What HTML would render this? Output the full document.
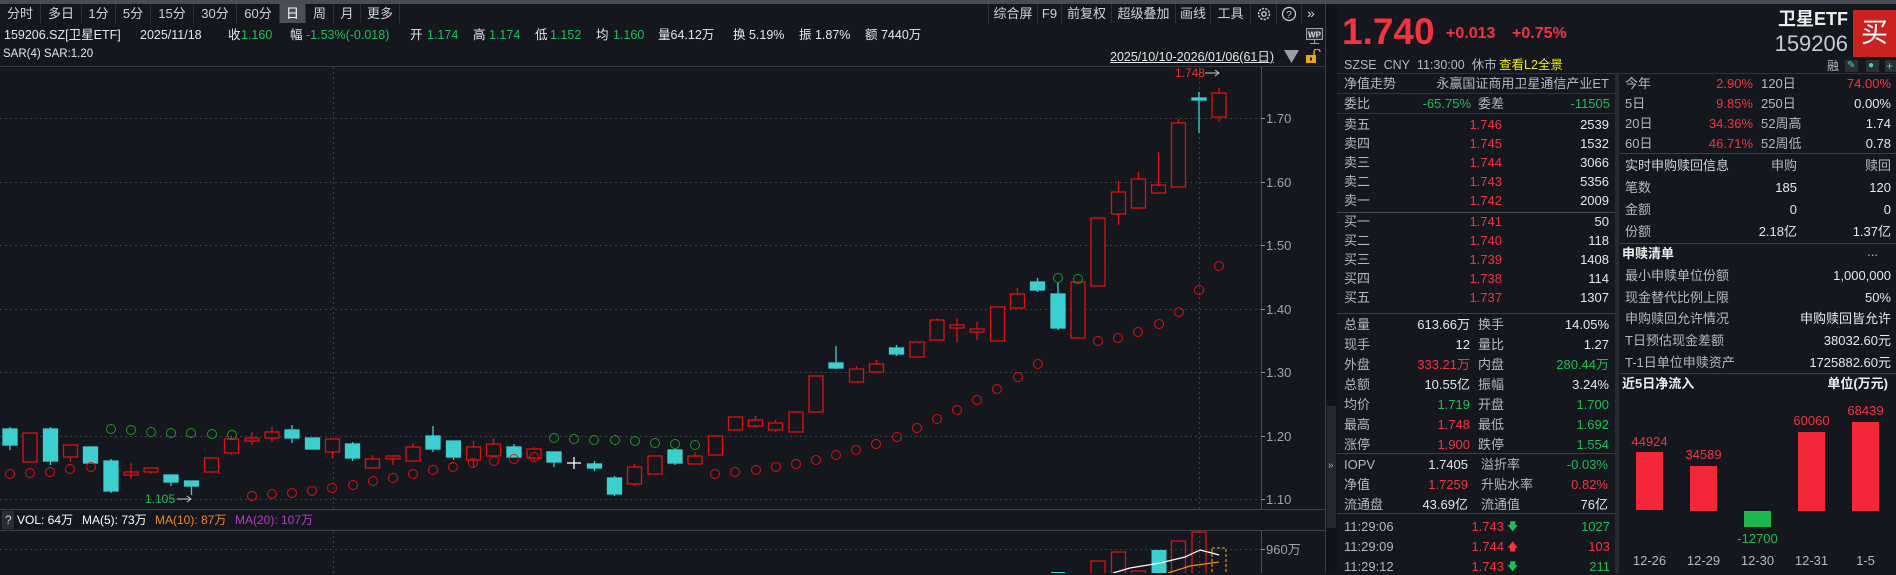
<!DOCTYPE html>
<html><head><meta charset="utf-8"><style>
*{margin:0;padding:0;box-sizing:border-box}
body{width:1896px;height:573px;background:#14171e;overflow:hidden;position:relative;font-family:"Liberation Sans","Noto Sans CJK SC",sans-serif;color:#d6d8dc;font-size:13px}
.a{position:absolute;white-space:nowrap;line-height:16px;height:16px}
.lb{color:#b4b8c0}
.w{color:#e6e8ea}
.rd{color:#f5333f}
.gn{color:#1fbf55}
.hl{position:absolute;height:1px;background:#2e323a}
.tab{position:absolute;top:4px;height:19px;line-height:19px;text-align:center;color:#d0d2d6;font-size:13px;border-right:1px solid #2c3038}
</style></head><body>
<!-- top strip -->
<div style="position:absolute;left:0;top:0;width:1896px;height:4px;background:#474c55"></div>
<!-- left tabs -->
<div class="tab" style="left:0;width:41px">分时</div>
<div class="tab" style="left:41px;width:41px">多日</div>
<div class="tab" style="left:82px;width:34px">1分</div>
<div class="tab" style="left:116px;width:35px">5分</div>
<div class="tab" style="left:151px;width:43px">15分</div>
<div class="tab" style="left:194px;width:43px">30分</div>
<div class="tab" style="left:237px;width:43px">60分</div>
<div class="tab" style="left:280px;width:26px;background:#4a4f58;color:#fff">日</div>
<div class="tab" style="left:306px;width:28px">周</div>
<div class="tab" style="left:334px;width:27px">月</div>
<div class="tab" style="left:361px;width:39px">更多</div>
<!-- right toolbar -->
<div class="tab" style="left:988px;width:50px;border-left:1px solid #2c3038">综合屏</div>
<div class="tab" style="left:1038px;width:24px">F9</div>
<div class="tab" style="left:1062px;width:50px">前复权</div>
<div class="tab" style="left:1112px;width:64px">超级叠加</div>
<div class="tab" style="left:1176px;width:35px">画线</div>
<div class="tab" style="left:1211px;width:40px">工具</div>
<div class="tab" style="left:1251px;width:26px"><svg width="16" height="16" viewBox="0 0 16 16" style="margin-top:2px"><circle cx="8" cy="8" r="5.5" fill="none" stroke="#d0d2d6" stroke-width="1.4" stroke-dasharray="2.2 1.2"/><circle cx="8" cy="8" r="2.2" fill="none" stroke="#d0d2d6" stroke-width="1.3"/></svg></div>
<div class="tab" style="left:1277px;width:25px"><svg width="16" height="16" viewBox="0 0 16 16" style="margin-top:2px"><circle cx="8" cy="8" r="6.5" fill="none" stroke="#d0d2d6" stroke-width="1.2"/><text x="8" y="12" font-size="10" fill="#d0d2d6" text-anchor="middle" font-family="Liberation Sans">?</text></svg></div>
<div class="a" style="left:1307px;top:5px;color:#d0d2d6;font-size:14px">»</div>
<!-- sidebar icons -->
<svg style="position:absolute;left:1306px;top:28px" width="17" height="16" viewBox="0 0 17 16"><rect x="0.5" y="0.5" width="16" height="11" fill="#2a2e36" stroke="#9ca0a8"/><text x="8.5" y="9.5" font-size="8" fill="#e0e0e0" text-anchor="middle" font-family="Liberation Sans" font-weight="bold">WP</text><line x1="8.5" y1="12" x2="8.5" y2="15" stroke="#9ca0a8"/><line x1="4" y1="15.5" x2="13" y2="15.5" stroke="#9ca0a8"/></svg>
<svg style="position:absolute;left:1305px;top:49px" width="17" height="14" viewBox="0 0 17 14"><path d="M9 6V3a3 3 0 0 1 6 0" fill="none" stroke="#e6a817" stroke-width="1.5"/><rect x="1" y="6" width="10" height="8" fill="#e6a817"/><rect x="5" y="8.5" width="2" height="3" fill="#14171e"/></svg>
<!-- info rows -->
<div class="a" style="left:4px;top:27px;font-size:12.5px"><span class="w">159206.SZ[卫星ETF]</span></div>
<div class="a w" style="left:140px;top:27px;font-size:12.5px">2025/11/18</div>
<div class="a w" style="left:228px;top:27px;font-size:12.5px">收</div><div class="a gn" style="left:241px;top:27px;font-size:12.5px">1.160</div>
<div class="a w" style="left:290px;top:27px;font-size:12.5px">幅</div><div class="a gn" style="left:306px;top:27px;font-size:12.5px">-1.53%(-0.018)</div>
<div class="a w" style="left:410px;top:27px;font-size:12.5px">开</div><div class="a gn" style="left:427px;top:27px;font-size:12.5px">1.174</div>
<div class="a w" style="left:473px;top:27px;font-size:12.5px">高</div><div class="a gn" style="left:489px;top:27px;font-size:12.5px">1.174</div>
<div class="a w" style="left:535px;top:27px;font-size:12.5px">低</div><div class="a gn" style="left:550px;top:27px;font-size:12.5px">1.152</div>
<div class="a w" style="left:596px;top:27px;font-size:12.5px">均</div><div class="a gn" style="left:613px;top:27px;font-size:12.5px">1.160</div>
<div class="a w" style="left:658px;top:27px;font-size:12.5px">量64.12万</div>
<div class="a w" style="left:733px;top:27px;font-size:12.5px">换 5.19%</div>
<div class="a w" style="left:799px;top:27px;font-size:12.5px">振 1.87%</div>
<div class="a w" style="left:865px;top:27px;font-size:12.5px">额 7440万</div>
<div class="a w" style="left:3px;top:46px;font-size:11.5px">SAR(4) SAR:1.20</div>
<div class="a w" style="left:1110px;top:49px;font-size:12.5px;text-decoration:underline">2025/10/10-2026/01/06(61日)</div>
<svg style="position:absolute;left:1284px;top:50px" width="15" height="13"><path d="M0 0H15L7.5 13Z" fill="#9a9ea6"/></svg>
<div class="hl" style="left:0;top:66px;width:1325px;background:#34383f"></div>

<!-- chart svg -->
<svg style="position:absolute;left:0;top:0" width="1325" height="573">
<g stroke="#3a3f48" stroke-dasharray="2 3" stroke-width="1">
<line x1="0" y1="118.5" x2="1261" y2="118.5"/><line x1="0" y1="182.5" x2="1261" y2="182.5"/><line x1="0" y1="245.5" x2="1261" y2="245.5"/><line x1="0" y1="309.5" x2="1261" y2="309.5"/><line x1="0" y1="372.5" x2="1261" y2="372.5"/><line x1="0" y1="436.5" x2="1261" y2="436.5"/><line x1="0" y1="499.5" x2="1261" y2="499.5"/>
<line x1="333.5" y1="67" x2="333.5" y2="509"/><line x1="1199.5" y1="67" x2="1199.5" y2="509"/>
<line x1="333.5" y1="531" x2="333.5" y2="573"/><line x1="1199.5" y1="531" x2="1199.5" y2="573"/>
<line x1="0" y1="549.5" x2="1261" y2="549.5"/>
</g>
<line x1="1261.5" y1="67" x2="1261.5" y2="509" stroke="#4a4e56"/>
<line x1="1261.5" y1="530" x2="1261.5" y2="573" stroke="#4a4e56"/>
<line x1="0" y1="509.5" x2="1325" y2="509.5" stroke="#3e4249"/>
<line x1="0" y1="530.5" x2="1325" y2="530.5" stroke="#3e4249"/>
<g stroke="#8a8e96"><line x1="1261" y1="118.5" x2="1265" y2="118.5"/><line x1="1261" y1="182.5" x2="1265" y2="182.5"/><line x1="1261" y1="245.5" x2="1265" y2="245.5"/><line x1="1261" y1="309.5" x2="1265" y2="309.5"/><line x1="1261" y1="372.5" x2="1265" y2="372.5"/><line x1="1261" y1="436.5" x2="1265" y2="436.5"/><line x1="1261" y1="499.5" x2="1265" y2="499.5"/><line x1="1261" y1="549.5" x2="1265" y2="549.5"/></g>
<g font-family="Liberation Sans" font-size="13" fill="#9ea2aa">
<text x="1266" y="123">1.70</text><text x="1266" y="187">1.60</text><text x="1266" y="250">1.50</text><text x="1266" y="314">1.40</text><text x="1266" y="377">1.30</text><text x="1266" y="441">1.20</text><text x="1266" y="504">1.10</text>
<text x="1266" y="554">960<tspan font-family="Noto Sans CJK SC">万</tspan></text>
</g>
<!-- candles -->
<g stroke="#e01010" stroke-width="1.3" fill="#14171e">
<line x1="30" y1="433" x2="30" y2="462"/><rect x="23" y="433" width="14" height="29"/>
<line x1="70.5" y1="445" x2="70.5" y2="462"/><rect x="63.5" y="445" width="14" height="12"/>
<line x1="131" y1="463" x2="131" y2="479"/><rect x="124" y="472" width="14" height="3"/>
<line x1="151" y1="468" x2="151" y2="474"/><rect x="144" y="468" width="14" height="4"/>
<line x1="211.5" y1="458" x2="211.5" y2="472"/><rect x="204.5" y="458" width="14" height="14"/>
<line x1="231.5" y1="436" x2="231.5" y2="455"/><rect x="224.5" y="439" width="14" height="14"/>
<line x1="252" y1="432" x2="252" y2="445"/><rect x="245" y="438" width="14" height="3"/>
<line x1="272" y1="427" x2="272" y2="442"/><rect x="265" y="432" width="14" height="6"/>
<line x1="332.5" y1="439" x2="332.5" y2="458"/><rect x="325.5" y="439" width="14" height="13"/>
<line x1="372.5" y1="455" x2="372.5" y2="468"/><rect x="365.5" y="459" width="14" height="9"/>
<line x1="393" y1="455" x2="393" y2="465"/><rect x="386" y="456" width="14" height="3"/>
<line x1="413" y1="443" x2="413" y2="461"/><rect x="406" y="447" width="14" height="14"/>
<line x1="473.5" y1="441" x2="473.5" y2="468"/><rect x="466.5" y="447" width="14" height="13"/>
<line x1="493.5" y1="438" x2="493.5" y2="456"/><rect x="486.5" y="444" width="14" height="12"/>
<line x1="534" y1="447" x2="534" y2="461"/><rect x="527" y="449" width="14" height="9"/>
<line x1="634.5" y1="464" x2="634.5" y2="486"/><rect x="627.5" y="467" width="14" height="17"/>
<line x1="655" y1="456" x2="655" y2="474"/><rect x="648" y="456" width="14" height="18"/>
<line x1="695" y1="452" x2="695" y2="464"/><rect x="688" y="456" width="14" height="8"/>
<line x1="715.5" y1="436" x2="715.5" y2="455"/><rect x="708.5" y="436" width="14" height="19"/>
<line x1="735.5" y1="417" x2="735.5" y2="430"/><rect x="728.5" y="417" width="14" height="13"/>
<line x1="755.5" y1="416" x2="755.5" y2="428"/><rect x="748.5" y="420" width="14" height="6"/>
<line x1="775.5" y1="420" x2="775.5" y2="432"/><rect x="768.5" y="423" width="14" height="7"/>
<line x1="796" y1="412" x2="796" y2="432"/><rect x="789" y="412" width="14" height="20"/>
<line x1="816" y1="376" x2="816" y2="412"/><rect x="809" y="376" width="14" height="36"/>
<line x1="856.5" y1="366" x2="856.5" y2="382"/><rect x="849.5" y="369" width="14" height="13"/>
<line x1="876.5" y1="360" x2="876.5" y2="372"/><rect x="869.5" y="364" width="14" height="8"/>
<line x1="917" y1="342" x2="917" y2="357"/><rect x="910" y="342" width="14" height="15"/>
<line x1="937" y1="318" x2="937" y2="340"/><rect x="930" y="320" width="14" height="20"/>
<line x1="957" y1="318" x2="957" y2="342"/><rect x="950" y="325" width="14" height="3"/>
<line x1="977" y1="322" x2="977" y2="340"/><rect x="970" y="329" width="14" height="3"/>
<line x1="997.5" y1="307" x2="997.5" y2="341"/><rect x="990.5" y="307" width="14" height="34"/>
<line x1="1017.5" y1="288" x2="1017.5" y2="308"/><rect x="1010.5" y="294" width="14" height="14"/>
<line x1="1078" y1="282" x2="1078" y2="338"/><rect x="1071" y="282" width="14" height="56"/>
<line x1="1098" y1="217" x2="1098" y2="286"/><rect x="1091" y="218" width="14" height="68"/>
<line x1="1118.5" y1="181" x2="1118.5" y2="225"/><rect x="1111.5" y="192" width="14" height="22"/>
<line x1="1138.5" y1="172" x2="1138.5" y2="209"/><rect x="1131.5" y="179" width="14" height="29"/>
<line x1="1158.5" y1="152" x2="1158.5" y2="193"/><rect x="1151.5" y="185" width="14" height="8"/>
<line x1="1178.5" y1="119" x2="1178.5" y2="187"/><rect x="1171.5" y="123" width="14" height="64"/>
<line x1="1219" y1="88" x2="1219" y2="122"/><rect x="1212" y="93" width="14" height="24"/>
</g>
<g stroke="#3dcfcf" stroke-width="1.3" fill="#3dcfcf">
<line x1="10" y1="427" x2="10" y2="450"/><rect x="3" y="429" width="14" height="16"/>
<line x1="50.5" y1="427" x2="50.5" y2="465"/><rect x="43.5" y="429" width="14" height="32"/>
<line x1="90.5" y1="447" x2="90.5" y2="463"/><rect x="83.5" y="447" width="14" height="16"/>
<line x1="111" y1="459" x2="111" y2="493"/><rect x="104" y="461" width="14" height="30"/>
<line x1="171" y1="475" x2="171" y2="486"/><rect x="164" y="475" width="14" height="7"/>
<line x1="191.5" y1="481" x2="191.5" y2="495"/><rect x="184.5" y="481" width="14" height="5"/>
<line x1="292" y1="425" x2="292" y2="443"/><rect x="285" y="430" width="14" height="8"/>
<line x1="312.5" y1="438" x2="312.5" y2="449"/><rect x="305.5" y="438" width="14" height="11"/>
<line x1="352.5" y1="442" x2="352.5" y2="461"/><rect x="345.5" y="444" width="14" height="14"/>
<line x1="433" y1="426" x2="433" y2="452"/><rect x="426" y="436" width="14" height="13"/>
<line x1="453.5" y1="441" x2="453.5" y2="460"/><rect x="446.5" y="441" width="14" height="16"/>
<line x1="514" y1="444" x2="514" y2="457"/><rect x="507" y="447" width="14" height="10"/>
<line x1="554" y1="452" x2="554" y2="467"/><rect x="547" y="452" width="14" height="10"/>
<line x1="594.5" y1="461" x2="594.5" y2="471"/><rect x="587.5" y="464" width="14" height="4"/>
<line x1="614.5" y1="476" x2="614.5" y2="496"/><rect x="607.5" y="478" width="14" height="16"/>
<line x1="675" y1="448" x2="675" y2="465"/><rect x="668" y="450" width="14" height="13"/>
<line x1="836" y1="346" x2="836" y2="369"/><rect x="829" y="363" width="14" height="5"/>
<line x1="896.5" y1="345" x2="896.5" y2="356"/><rect x="889.5" y="348" width="14" height="6"/>
<line x1="1037.5" y1="278" x2="1037.5" y2="292"/><rect x="1030.5" y="282" width="14" height="8"/>
<line x1="1058" y1="283" x2="1058" y2="330"/><rect x="1051" y="294" width="14" height="34"/>
<line x1="1199" y1="92" x2="1199" y2="133"/><rect x="1192" y="98" width="14" height="2"/>
</g>
<g stroke="#ffffff" stroke-width="1.3"><line x1="574" y1="457" x2="574" y2="469"/><line x1="567" y1="463" x2="581" y2="463"/></g>
<!-- SAR -->
<g fill="none" stroke="#e01010" stroke-width="1">
<circle cx="10" cy="474" r="4.5"/><circle cx="30" cy="473" r="4.5"/><circle cx="50" cy="472" r="4.5"/><circle cx="70" cy="469" r="4.5"/><circle cx="91" cy="467" r="4.5"/>
<circle cx="252" cy="496" r="4.5"/><circle cx="272" cy="494" r="4.5"/><circle cx="292" cy="493" r="4.5"/><circle cx="312" cy="491" r="4.5"/><circle cx="332" cy="488" r="4.5"/><circle cx="353" cy="485" r="4.5"/><circle cx="373" cy="481" r="4.5"/><circle cx="393" cy="478" r="4.5"/><circle cx="413" cy="474" r="4.5"/><circle cx="433" cy="470" r="4.5"/><circle cx="453" cy="467" r="4.5"/><circle cx="473" cy="463" r="4.5"/><circle cx="494" cy="461" r="4.5"/><circle cx="514" cy="459" r="4.5"/><circle cx="534" cy="457" r="4.5"/>
<circle cx="715" cy="474" r="4.5"/><circle cx="735" cy="472" r="4.5"/><circle cx="756" cy="470" r="4.5"/><circle cx="776" cy="467" r="4.5"/><circle cx="796" cy="464" r="4.5"/><circle cx="816" cy="460" r="4.5"/><circle cx="836" cy="455" r="4.5"/><circle cx="856" cy="450" r="4.5"/><circle cx="876" cy="444" r="4.5"/><circle cx="897" cy="437" r="4.5"/><circle cx="917" cy="428" r="4.5"/><circle cx="937" cy="419" r="4.5"/><circle cx="957" cy="410" r="4.5"/><circle cx="977" cy="400" r="4.5"/><circle cx="997" cy="389" r="4.5"/><circle cx="1018" cy="377" r="4.5"/><circle cx="1038" cy="364" r="4.5"/>
<circle cx="1098" cy="341" r="4.5"/><circle cx="1118" cy="338" r="4.5"/><circle cx="1138" cy="332" r="4.5"/><circle cx="1159" cy="324" r="4.5"/><circle cx="1179" cy="312" r="4.5"/><circle cx="1199" cy="290" r="4.5"/><circle cx="1219" cy="266" r="4.5"/>
</g>
<g fill="none" stroke="#1a9a1a" stroke-width="1">
<circle cx="111" cy="429" r="4.5"/><circle cx="131" cy="430" r="4.5"/><circle cx="151" cy="432" r="4.5"/><circle cx="171" cy="433" r="4.5"/><circle cx="191" cy="433" r="4.5"/><circle cx="212" cy="434" r="4.5"/><circle cx="232" cy="435" r="4.5"/>
<circle cx="554" cy="438" r="4.5"/><circle cx="574" cy="439" r="4.5"/><circle cx="594" cy="440" r="4.5"/><circle cx="615" cy="440" r="4.5"/><circle cx="635" cy="441" r="4.5"/><circle cx="655" cy="443" r="4.5"/><circle cx="675" cy="444" r="4.5"/><circle cx="695" cy="445" r="4.5"/>
<circle cx="1058" cy="278" r="4.5"/><circle cx="1078" cy="279" r="4.5"/>
</g>
<!-- labels -->
<text x="1175" y="77" font-family="Liberation Sans" font-size="12" fill="#e83030">1.748</text>
<path d="M1205 73H1219M1215 70L1219 73L1215 76" stroke="#c8c8c8" fill="none"/>
<text x="145" y="503" font-family="Liberation Sans" font-size="12" fill="#1fbf55">1.105</text>
<path d="M177 499H191M187 496L191 499L187 502" stroke="#c8c8c8" fill="none"/>
<!-- volume -->
<g stroke="#e01010" stroke-width="1.3" fill="none">
<rect x="1091" y="561" width="14" height="14"/><rect x="1111.5" y="552" width="14" height="24"/><rect x="1131.5" y="571" width="14" height="5"/><rect x="1171.5" y="541" width="14" height="35"/><rect x="1192" y="532" width="14" height="44"/>
</g>
<rect x="1051" y="572" width="14" height="3" fill="#3dcfcf"/>
<rect x="1151.5" y="550" width="15" height="25" fill="#3dcfcf"/>
<rect x="1212" y="548" width="14" height="28" fill="none" stroke="#f0b020" stroke-dasharray="3 2"/>
<polyline points="1113,573 1130,568 1160,563 1185,557 1200,550 1212,553 1219,555" fill="none" stroke="#ffffff" stroke-width="1.2"/>
<polyline points="1168,573 1190,566 1219,562" fill="none" stroke="#f08a1e" stroke-width="1.2"/>
<rect x="2" y="511" width="12" height="18" fill="#2a2e36"/>
<text x="5" y="524" font-family="Liberation Sans" font-size="12" fill="#d0d0d0">?</text>
<g font-family="Liberation Sans,Noto Sans CJK SC" font-size="12">
<text x="17" y="524" fill="#ffffff">VOL: 64万</text>
<text x="82" y="524" fill="#ffffff">MA(5): 73万</text>
<text x="155" y="524" fill="#f08a1e">MA(10): 87万</text>
<text x="235" y="524" fill="#b040c8">MA(20): 107万</text>
</g>
</svg>

<!-- sidebar separator / panel -->
<div style="position:absolute;left:1325px;top:4px;width:1px;height:569px;background:#3a3e45"></div>
<div style="position:absolute;left:1326px;top:4px;width:11px;height:569px;background:#101319"></div>
<div style="position:absolute;left:1327px;top:406px;width:9px;height:122px;background:#24282f"></div>
<div class="a" style="left:1328px;top:458px;font-size:10px;color:#aaa">»</div>

<!-- header -->
<div class="a" style="left:1342px;top:12px;height:40px;line-height:40px;font-size:37px;font-weight:bold;color:#f5333f">1.740</div>
<div class="a rd" style="left:1446px;top:26px;font-size:16px;font-weight:bold">+0.013</div>
<div class="a rd" style="left:1512px;top:26px;font-size:16px;font-weight:bold">+0.75%</div>
<div class="a" style="right:48px;top:9px;height:20px;line-height:20px;font-size:18px;font-weight:bold;color:#eee">卫星ETF</div>
<div class="a" style="right:48px;top:33px;height:22px;line-height:22px;font-size:22px;color:#c8ccd2">159206</div>
<div style="position:absolute;left:1853px;top:10px;width:43px;height:47px;background:#c9221f;color:#fff;font-size:27px;line-height:47px;text-align:center">买</div>
<div class="a lb" style="left:1344px;top:57px;font-size:12.5px">SZSE&nbsp;&nbsp;CNY&nbsp;&nbsp;11:30:00&nbsp;&nbsp;休市</div>
<div class="a" style="left:1499px;top:57px;font-size:12.5px;color:#f0f000">查看L2全景</div>
<div class="a lb" style="left:1827px;top:58px;font-size:12px">融</div>
<div style="position:absolute;left:1845px;top:60px;width:13px;height:12px;background:#2a3038"></div>
<div style="position:absolute;left:1866px;top:60px;width:13px;height:12px;background:#2a3038"></div>
<div style="position:absolute;left:1885px;top:60px;width:11px;height:12px;background:#2a3038"></div>
<div class="a" style="left:1847px;top:58px;font-size:10px;color:#4cc;">✎</div>
<div class="a" style="left:1868px;top:58px;font-size:10px;color:#4cc;">●</div>
<div class="a" style="left:1886px;top:58px;font-size:12px;color:#4cc;">+</div>

<!-- lines -->
<div class="hl" style="left:1337px;top:73px;width:559px"></div>
<div style="position:absolute;left:1615px;top:73px;width:4px;height:500px;background:#262a31"></div>
<div class="hl" style="left:1337px;top:93px;width:278px"></div>
<div class="hl" style="left:1337px;top:113px;width:278px"></div>
<div class="hl" style="left:1337px;top:212px;width:278px;background:#44484f"></div>
<div class="hl" style="left:1337px;top:313px;width:278px;background:#3a3e45"></div>
<div class="hl" style="left:1337px;top:453px;width:278px;background:#3a3e45"></div>
<div class="hl" style="left:1337px;top:513px;width:278px;background:#3a3e45"></div>
<div class="hl" style="left:1619px;top:153px;width:277px;background:#3a3e45"></div>
<div class="hl" style="left:1619px;top:243px;width:277px;background:#3a3e45"></div>
<div class="hl" style="left:1619px;top:373px;width:277px;background:#3a3e45"></div>

<!-- left column -->
<div class="a lb" style="left:1344px;top:76px">净值走势</div><div class="a lb" style="right:287px;top:76px">永赢国证商用卫星通信产业ET</div>
<div class="a lb" style="left:1344px;top:96px">委比</div><div class="a gn" style="right:425px;top:96px">-65.75%</div><div class="a lb" style="left:1478px;top:96px">委差</div><div class="a gn" style="right:286px;top:96px">-11505</div>

<div class="a lb" style="left:1344px;top:117px">卖五</div><div class="a rd" style="right:394px;top:117px">1.746</div><div class="a w" style="right:287px;top:117px">2539</div>
<div class="a lb" style="left:1344px;top:136px">卖四</div><div class="a rd" style="right:394px;top:136px">1.745</div><div class="a w" style="right:287px;top:136px">1532</div>
<div class="a lb" style="left:1344px;top:155px">卖三</div><div class="a rd" style="right:394px;top:155px">1.744</div><div class="a w" style="right:287px;top:155px">3066</div>
<div class="a lb" style="left:1344px;top:174px">卖二</div><div class="a rd" style="right:394px;top:174px">1.743</div><div class="a w" style="right:287px;top:174px">5356</div>
<div class="a lb" style="left:1344px;top:193px">卖一</div><div class="a rd" style="right:394px;top:193px">1.742</div><div class="a w" style="right:287px;top:193px">2009</div>
<div class="a lb" style="left:1344px;top:214px">买一</div><div class="a rd" style="right:394px;top:214px">1.741</div><div class="a w" style="right:287px;top:214px">50</div>
<div class="a lb" style="left:1344px;top:233px">买二</div><div class="a rd" style="right:394px;top:233px">1.740</div><div class="a w" style="right:287px;top:233px">118</div>
<div class="a lb" style="left:1344px;top:252px">买三</div><div class="a rd" style="right:394px;top:252px">1.739</div><div class="a w" style="right:287px;top:252px">1408</div>
<div class="a lb" style="left:1344px;top:271px">买四</div><div class="a rd" style="right:394px;top:271px">1.738</div><div class="a w" style="right:287px;top:271px">114</div>
<div class="a lb" style="left:1344px;top:290px">买五</div><div class="a rd" style="right:394px;top:290px">1.737</div><div class="a w" style="right:287px;top:290px">1307</div>

<div class="a lb" style="left:1344px;top:317px">总量</div><div class="a w" style="right:426px;top:317px">613.66万</div><div class="a lb" style="left:1478px;top:317px">换手</div><div class="a w" style="right:287px;top:317px">14.05%</div>
<div class="a lb" style="left:1344px;top:337px">现手</div><div class="a w" style="right:426px;top:337px">12</div><div class="a lb" style="left:1478px;top:337px">量比</div><div class="a w" style="right:287px;top:337px">1.27</div>
<div class="a lb" style="left:1344px;top:357px">外盘</div><div class="a rd" style="right:426px;top:357px">333.21万</div><div class="a lb" style="left:1478px;top:357px">内盘</div><div class="a gn" style="right:287px;top:357px">280.44万</div>
<div class="a lb" style="left:1344px;top:377px">总额</div><div class="a w" style="right:426px;top:377px">10.55亿</div><div class="a lb" style="left:1478px;top:377px">振幅</div><div class="a w" style="right:287px;top:377px">3.24%</div>
<div class="a lb" style="left:1344px;top:397px">均价</div><div class="a gn" style="right:426px;top:397px">1.719</div><div class="a lb" style="left:1478px;top:397px">开盘</div><div class="a gn" style="right:287px;top:397px">1.700</div>
<div class="a lb" style="left:1344px;top:417px">最高</div><div class="a rd" style="right:426px;top:417px">1.748</div><div class="a lb" style="left:1478px;top:417px">最低</div><div class="a gn" style="right:287px;top:417px">1.692</div>
<div class="a lb" style="left:1344px;top:437px">涨停</div><div class="a rd" style="right:426px;top:437px">1.900</div><div class="a lb" style="left:1478px;top:437px">跌停</div><div class="a gn" style="right:287px;top:437px">1.554</div>

<div class="a lb" style="left:1344px;top:457px">IOPV</div><div class="a w" style="right:428px;top:457px">1.7405</div><div class="a lb" style="left:1481px;top:457px">溢折率</div><div class="a gn" style="right:288px;top:457px">-0.03%</div>
<div class="a lb" style="left:1344px;top:477px">净值</div><div class="a rd" style="right:428px;top:477px">1.7259</div><div class="a lb" style="left:1481px;top:477px">升贴水率</div><div class="a rd" style="right:288px;top:477px">0.82%</div>
<div class="a lb" style="left:1344px;top:497px">流通盘</div><div class="a w" style="right:428px;top:497px">43.69亿</div><div class="a lb" style="left:1481px;top:497px">流通值</div><div class="a w" style="right:288px;top:497px">76亿</div>

<div class="a lb" style="left:1344px;top:519px">11:29:06</div><div class="a rd" style="right:392px;top:519px">1.743</div><div class="a gn" style="left:1507px;top:519px;font-size:11px">🡇</div><div class="a gn" style="right:286px;top:519px">1027</div>
<div class="a lb" style="left:1344px;top:539px">11:29:09</div><div class="a rd" style="right:392px;top:539px">1.744</div><div class="a rd" style="left:1507px;top:539px;font-size:11px">🡅</div><div class="a rd" style="right:286px;top:539px">103</div>
<div class="a lb" style="left:1344px;top:559px">11:29:12</div><div class="a rd" style="right:392px;top:559px">1.743</div><div class="a gn" style="left:1507px;top:559px;font-size:11px">🡇</div><div class="a gn" style="right:286px;top:559px">211</div>

<!-- right column -->
<div class="a lb" style="left:1625px;top:76px">今年</div><div class="a rd" style="right:143px;top:76px">2.90%</div><div class="a lb" style="left:1761px;top:76px">120日</div><div class="a rd" style="right:5px;top:76px">74.00%</div>
<div class="a lb" style="left:1625px;top:96px">5日</div><div class="a rd" style="right:143px;top:96px">9.85%</div><div class="a lb" style="left:1761px;top:96px">250日</div><div class="a w" style="right:5px;top:96px">0.00%</div>
<div class="a lb" style="left:1625px;top:116px">20日</div><div class="a rd" style="right:143px;top:116px">34.36%</div><div class="a lb" style="left:1761px;top:116px">52周高</div><div class="a w" style="right:5px;top:116px">1.74</div>
<div class="a lb" style="left:1625px;top:136px">60日</div><div class="a rd" style="right:143px;top:136px">46.71%</div><div class="a lb" style="left:1761px;top:136px">52周低</div><div class="a w" style="right:5px;top:136px">0.78</div>

<div class="a lb" style="left:1625px;top:158px;color:#d0d3d8">实时申购赎回信息</div><div class="a lb" style="right:99px;top:158px">申购</div><div class="a lb" style="right:5px;top:158px">赎回</div>
<div class="a lb" style="left:1625px;top:180px">笔数</div><div class="a w" style="right:99px;top:180px">185</div><div class="a w" style="right:5px;top:180px">120</div>
<div class="a lb" style="left:1625px;top:202px">金额</div><div class="a w" style="right:99px;top:202px">0</div><div class="a w" style="right:5px;top:202px">0</div>
<div class="a lb" style="left:1625px;top:224px">份额</div><div class="a w" style="right:99px;top:224px">2.18亿</div><div class="a w" style="right:5px;top:224px">1.37亿</div>

<div class="a" style="left:1622px;top:246px;font-weight:bold;color:#f0f0f0">申赎清单</div><div class="a lb" style="right:18px;top:244px">...</div>
<div class="a lb" style="left:1625px;top:268px">最小申赎单位份额</div><div class="a w" style="right:5px;top:268px">1,000,000</div>
<div class="a lb" style="left:1625px;top:290px">现金替代比例上限</div><div class="a w" style="right:5px;top:290px">50%</div>
<div class="a lb" style="left:1625px;top:311px">申购赎回允许情况</div><div class="a w" style="right:5px;top:311px">申购赎回皆允许</div>
<div class="a lb" style="left:1625px;top:333px">T日预估现金差额</div><div class="a w" style="right:5px;top:333px">38032.60元</div>
<div class="a lb" style="left:1625px;top:355px">T-1日单位申赎资产</div><div class="a w" style="right:5px;top:355px">1725882.60元</div>

<div class="a" style="left:1622px;top:376px;font-weight:bold;color:#f0f0f0">近5日净流入</div><div class="a" style="right:8px;top:376px;font-weight:bold;color:#f0f0f0">单位(万元)</div>
<div style="position:absolute;left:1636px;top:452px;width:27px;height:58px;background:#f5283a"></div>
<div style="position:absolute;left:1690px;top:466px;width:27px;height:45px;background:#f5283a"></div>
<div style="position:absolute;left:1744px;top:511px;width:27px;height:16px;background:#1cb84e"></div>
<div style="position:absolute;left:1798px;top:432px;width:27px;height:79px;background:#f5283a"></div>
<div style="position:absolute;left:1852px;top:422px;width:27px;height:89px;background:#f5283a"></div>
<div class="a rd" style="left:1626px;top:434px;width:47px;text-align:center">44924</div>
<div class="a rd" style="left:1680px;top:447px;width:47px;text-align:center">34589</div>
<div class="a gn" style="left:1734px;top:531px;width:47px;text-align:center">-12700</div>
<div class="a rd" style="left:1788px;top:413px;width:47px;text-align:center">60060</div>
<div class="a rd" style="left:1842px;top:403px;width:47px;text-align:center">68439</div>
<div class="a lb" style="left:1626px;top:553px;width:47px;text-align:center">12-26</div>
<div class="a lb" style="left:1680px;top:553px;width:47px;text-align:center">12-29</div>
<div class="a lb" style="left:1734px;top:553px;width:47px;text-align:center">12-30</div>
<div class="a lb" style="left:1788px;top:553px;width:47px;text-align:center">12-31</div>
<div class="a lb" style="left:1842px;top:553px;width:47px;text-align:center">1-5</div>
</body></html>
